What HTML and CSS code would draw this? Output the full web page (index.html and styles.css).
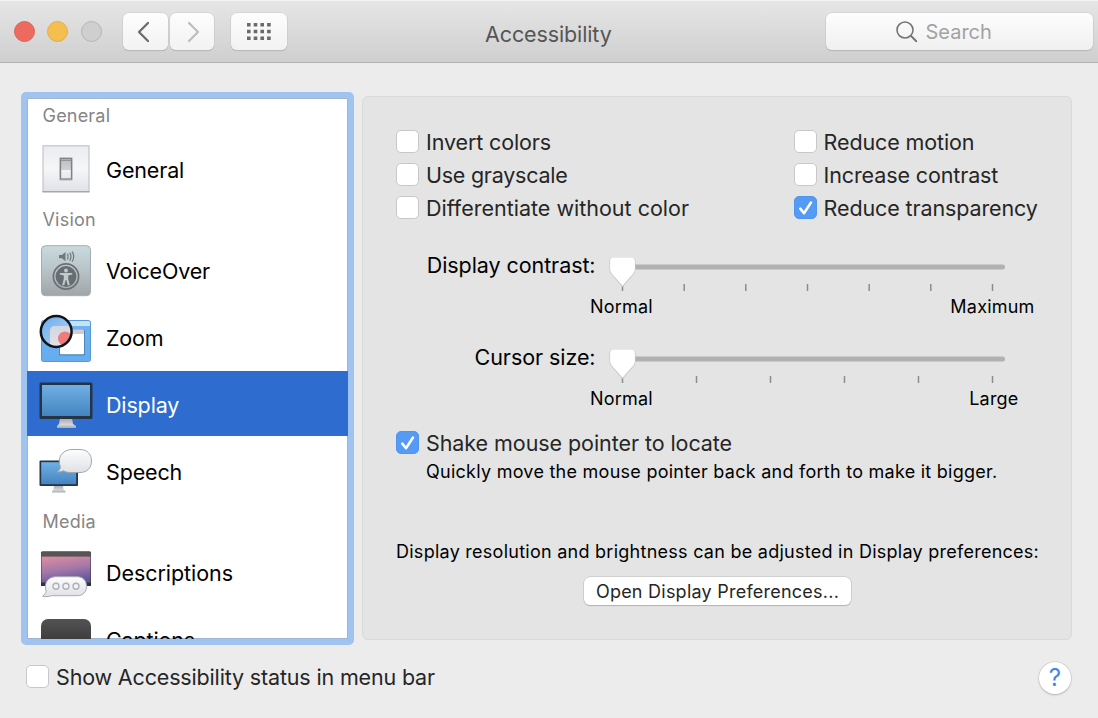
FILE: index.html
```
<!DOCTYPE html>
<html lang="en">
<head>
<meta charset="utf-8">
<title>Accessibility</title>
<link rel="stylesheet" href="styles.css">
</head>
<body>
<div class="window">
  <header class="titlebar">
    <div class="lights">
      <span class="light light-red"></span>
      <span class="light light-yellow"></span>
      <span class="light light-off"></span>
    </div>
    <div class="nav">
      <button class="tool tool-back" aria-label="Back"><svg width="14" height="22" viewBox="0 0 14 22"><path d="M12 2 L3 11 L12 20" fill="none" stroke="#6c6c6c" stroke-width="2.3" stroke-linecap="round" stroke-linejoin="round"/></svg></button>
      <button class="tool tool-forward" aria-label="Forward"><svg width="14" height="22" viewBox="0 0 14 22"><path d="M2 2 L11 11 L2 20" fill="none" stroke="#bdbdbd" stroke-width="2.2" stroke-linecap="round" stroke-linejoin="round"/></svg></button>
    </div>
    <button class="tool tool-grid" aria-label="Show all">
      <svg width="24" height="17" viewBox="0 0 24 17" fill="#6a6a6a"><path d="M0 0h3.6v3.6H0zM6.7 0h3.6v3.6H6.7zM13.4 0H17v3.6h-3.6zM20.1 0h3.6v3.6h-3.6zM0 6.7h3.6v3.6H0zM6.7 6.7h3.6v3.6H6.7zM13.4 6.7H17v3.6h-3.6zM20.1 6.7h3.6v3.6h-3.6zM0 13.4h3.6V17H0zM6.7 13.4h3.6V17H6.7zM13.4 13.4H17V17h-3.6zM20.1 13.4h3.6V17h-3.6z"/></svg>
    </button>
    <h1 class="title">Accessibility</h1>
    <div class="search">
      <svg width="22" height="22" viewBox="0 0 22 22" fill="none" stroke="#757575" stroke-linecap="round"><circle cx="9" cy="9" r="8" stroke-width="1.6"/><path d="M14.8 14.8 L20.3 20.2" stroke-width="1.9"/></svg>
      <span class="search-text">Search</span>
    </div>
  </header>

  <main class="content">
    <nav class="sidebar">
      <div class="group group-first">General</div>
      <div class="item">
        <svg class="icon icon-low" width="54" height="54" viewBox="0 0 54 54">
          <defs>
            <linearGradient id="plate" x1="0" y1="0" x2="0" y2="1"><stop offset="0" stop-color="#ebecef"/><stop offset=".5" stop-color="#f5f6f8"/><stop offset="1" stop-color="#e0e2e7"/></linearGradient>
            <linearGradient id="switch" x1="0" y1="0" x2="0" y2="1"><stop offset="0" stop-color="#b9bbbe"/><stop offset=".2" stop-color="#c2c4c7"/><stop offset=".55" stop-color="#cfd1d4"/><stop offset=".57" stop-color="#f2f3f4"/><stop offset="1" stop-color="#e5e7e9"/></linearGradient>
          </defs>
          <rect x="4" y="3.8" width="46" height="46" fill="url(#plate)" stroke="#b9bbbe"/>
          <path d="M3.5 49.8h47" stroke="#96989b"/>
          <rect x="20" y="15" width="14" height="24" rx="1.5" fill="#cfd0d3"/>
          <rect x="21.5" y="16.5" width="11" height="20.5" fill="url(#switch)" stroke="#808285" stroke-width="1.3"/>
          <path d="M22 18.4h10" stroke="#8d8f92" stroke-width="1"/>
        </svg>
        <span class="item-label">General</span>
      </div>
      <div class="group">Vision</div>
      <div class="item">
        <svg class="icon" width="54" height="54" viewBox="0 0 54 54">
          <defs><linearGradient id="vo" x1="0" y1="0" x2="0" y2="1"><stop offset="0" stop-color="#c9dade"/><stop offset=".5" stop-color="#b8c3c7"/><stop offset="1" stop-color="#9fa5a9"/></linearGradient></defs>
          <rect x="2.5" y="2.7" width="49" height="50" rx="4" fill="url(#vo)" stroke="#a2adb1"/>
          <path d="M20 12h2.8l3.7-3v9.2l-3.7-3H20z" fill="#6f7a7e"/>
          <path d="M28.4 10.800q1.500 2.800 0 5.600M30.800 9.600q2.300 4 0 8M33.200 8.600q3 5 0 10" fill="none" stroke="#6f7a7e" stroke-width="1.200"/>
          <circle cx="27" cy="33.500" r="12.600" fill="none" stroke="#6a7175" stroke-width="1.700"/>
          <circle cx="27" cy="33.500" r="10.400" fill="#676e72"/>
          <circle cx="27" cy="27.500" r="1.900" fill="#c3cacc"/>
          <path d="M20.800 30h12.400v1.600l-4 .9v3.200l1.600 6.600h-2l-1.500-5.300h-.6L25.200 42.300h-2l1.600-6.600v-3.200l-4-.9z" fill="#c3cacc"/>
        </svg>
        <span class="item-label">VoiceOver</span>
      </div>
      <div class="item">
        <svg class="icon icon-low" width="54" height="54" viewBox="0 0 54 54">
          <defs>
            <linearGradient id="desk" x1="0" y1="0" x2="0" y2="1"><stop offset="0" stop-color="#71b3ee"/><stop offset="1" stop-color="#64adf0"/></linearGradient>
            <linearGradient id="lens" x1="0" y1="0" x2="1" y2="1"><stop offset="0" stop-color="#69a9ea"/><stop offset="1" stop-color="#b8dcf8"/></linearGradient>
            <linearGradient id="page" x1="0" y1="0" x2="0" y2="1"><stop offset="0" stop-color="#d3d6e0"/><stop offset="1" stop-color="#e9e3e8"/></linearGradient>
            <clipPath id="lensclip"><circle cx="17.2" cy="20.5" r="14.7"/></clipPath>
          </defs>
          <rect x="2.5" y="9.5" width="49" height="41" rx="2" fill="url(#desk)" stroke="#5798d5"/>
          <path d="M3 15V12q0-2 2-2h44q2 0 2 2v3z" fill="#c3e4f7"/>
          <rect x="20" y="18.5" width="26" height="26" rx="1.5" fill="#4b86bd"/>
          <rect x="21" y="18.7" width="24" height="24.5" rx="1" fill="#fff"/>
          <path d="M21 19.700q0-1 1-1h22q1 0 1 1v3.300H21z" fill="#d5cbd3"/>
          <g clip-path="url(#lensclip)"><rect x="1" y="4" width="33" height="33" fill="url(#lens)"/><path d="M11 40V20q0-5 5-5h20v25z" fill="url(#page)"/><circle cx="26" cy="27.500" r="7" fill="#ee7b7e"/></g>
          <circle cx="17.200" cy="20.500" r="15.400" fill="none" stroke="#101418" stroke-width="2.500"/>
        </svg>
        <span class="item-label">Zoom</span>
      </div>
      <div class="item item-selected">
        <svg class="icon icon-low" width="54" height="54" viewBox="0 0 54 54">
          <defs>
            <linearGradient id="screen" x1="0" y1="0" x2="0" y2="1"><stop offset="0" stop-color="#70b0e3"/><stop offset="1" stop-color="#4584c0"/></linearGradient>
            <linearGradient id="foot" x1="0" y1="0" x2="0" y2="1"><stop offset="0" stop-color="#a2a5ab"/><stop offset=".65" stop-color="#d5d6d9"/><stop offset="1" stop-color="#a9abb0"/></linearGradient>
          </defs>
          <path d="M21 41h12l1 6 3 2v2H18v-2l2-2z" fill="url(#foot)"/>
          <rect x=".5" y="5.500" width="53" height="36.500" rx="1.500" fill="#243444"/>
          <rect x="3" y="8" width="48" height="31" fill="url(#screen)"/>
        </svg>
        <span class="item-label">Display</span>
      </div>
      <div class="item">
        <svg class="icon" width="54" height="54" viewBox="0 0 54 54">
          <defs><linearGradient id="bub" x1="0" y1="0" x2="0" y2="1"><stop offset="0" stop-color="#fdfdfe"/><stop offset="1" stop-color="#dfe1e6"/></linearGradient></defs>
          <path d="M15 42h9l.5 4.500 2 1.500v1.500H13V48l1.500-1.500z" fill="url(#foot)"/>
          <rect x=".5" y="17.500" width="38.500" height="25.500" rx="1" fill="#243444"/>
          <rect x="2.200" y="19.200" width="35" height="22" fill="url(#screen)"/>
          <path d="M33 6.500h8c7 0 11.500 4.500 11.500 11.500S48 29.500 41 29.500h-9c-3.500 0-5.500-.5-7.500-1.700-1.500.8-3.500 1.200-6 1.200 2-1.500 3-3.500 2.800-5.500-.8-1.500-1-3.300-1-5.500C20.500 11 26 6.500 33 6.500z" fill="url(#bub)" stroke="#a0a6ad"/>
        </svg>
        <span class="item-label">Speech</span>
      </div>
      <div class="group">Media</div>
      <div class="item">
        <svg class="icon icon-media" width="54" height="54" viewBox="0 0 54 54">
          <defs><linearGradient id="sunset" x1=".3" y1="0" x2=".6" y2="1"><stop offset="0" stop-color="#d68ca1"/><stop offset=".5" stop-color="#a477a8"/><stop offset="1" stop-color="#5c579b"/></linearGradient></defs>
          <path d="M2 5.500q0-2 2-2h46q2 0 2 2V38H2z" fill="#333336"/>
          <rect x="2" y="3.500" width="50" height="5" rx="1" fill="#555"/>
          <rect x="2.500" y="8.500" width="49" height="26" fill="url(#sunset)"/>
          <path d="M17 28.700h21c6 0 9.500 4 9.500 9.500s-3.500 9.500-9.500 9.500H12.500c-3 1-6 1.200-9 .6 2-1.500 3.300-3.300 3.700-5-.6-1.500-.7-3-.7-5.100 0-5.500 4.500-9.500 10.500-9.500z" fill="url(#bub)" stroke="#aaabb0"/>
          <g fill="#f2f2f4" stroke="#b0b1b6" stroke-width="1.400"><circle cx="17" cy="38.300" r="3"/><circle cx="27" cy="38.300" r="3"/><circle cx="37" cy="38.300" r="3"/></g>
        </svg>
        <span class="item-label t-desc">Descriptions</span>
      </div>
      <div class="item">
        <svg class="icon icon-media" width="54" height="54" viewBox="0 0 54 54">
          <defs><linearGradient id="cap" x1="0" y1="0" x2="0" y2="1"><stop offset="0" stop-color="#535353"/><stop offset="1" stop-color="#222"/></linearGradient></defs>
          <rect x="2" y="5" width="50" height="46" rx="7" fill="url(#cap)"/>
        </svg>
        <span class="item-label">Captions</span>
      </div>
    </nav>

    <section class="panel">
      <div class="options">
        <div class="column">
          <label class="check"><span class="box"></span><span>Invert colors</span></label>
          <label class="check"><span class="box"></span><span class="t-gray">Use grayscale</span></label>
          <label class="check"><span class="box"></span><span class="t-diff">Differentiate without color</span></label>
        </div>
        <div class="column">
          <label class="check"><span class="box"></span><span>Reduce motion</span></label>
          <label class="check"><span class="box"></span><span>Increase contrast</span></label>
          <label class="check"><span class="box box-on"><svg width="23" height="23" viewBox="0 0 23 23"><path d="M6.300 12.600 L10 17.200 L17 6.500" fill="none" stroke="#fff" stroke-width="2.500" stroke-linecap="round" stroke-linejoin="round"/></svg></span><span>Reduce transparency</span></label>
        </div>
      </div>

      <div class="slider-row">
        <span class="slider-label">Display contrast:</span>
        <div class="slider">
          <svg width="400" height="40" viewBox="0 0 400 40">
            <rect x="6" y="10.500" width="395" height="5" rx="2.500" fill="#b1b1b1"/>
            <path d="M18.500 30v7M80.200 30v7M141.800 30v7M203.500 30v7M265.200 30v7M326.800 30v7M388.500 30v7" stroke="#8c8c8c" stroke-width="1.500"/>
            <g transform="translate(0 1)">
              <path d="M9.500 2.600h18q4 0 4 4v8q0 2.500-1.700 4.500L18.500 32.200 7.200 19.100q-1.700-2-1.700-4.500v-8q0-4 4-4z" fill="#c4c4c4"/>
              <path d="M9.500 2.500h18q3.400 0 3.400 3.500v8.200q0 2.300-1.600 4.200L18.500 30.800 7.700 18.400q-1.600-1.900-1.600-4.200V6q0-3.500 3.400-3.500z" fill="#fff"/>
            </g>
          </svg>
          <div class="ends"><span>Normal</span><span>Maximum</span></div>
        </div>
      </div>
      <div class="slider-row">
        <span class="slider-label">Cursor size:</span>
        <div class="slider">
          <svg width="400" height="40" viewBox="0 0 400 40">
            <rect x="6" y="10.500" width="395" height="5" rx="2.500" fill="#b1b1b1"/>
            <path d="M18.500 30v7M92.500 30v7M166.500 30v7M240.500 30v7M314.500 30v7M388.500 30v7" stroke="#8c8c8c" stroke-width="1.500"/>
            <g transform="translate(0 1)">
              <path d="M9.500 2.600h18q4 0 4 4v8q0 2.500-1.700 4.500L18.500 32.200 7.200 19.100q-1.700-2-1.700-4.500v-8q0-4 4-4z" fill="#c4c4c4"/>
              <path d="M9.500 2.500h18q3.400 0 3.400 3.500v8.200q0 2.300-1.600 4.200L18.500 30.800 7.700 18.400q-1.600-1.900-1.600-4.200V6q0-3.500 3.400-3.500z" fill="#fff"/>
            </g>
          </svg>
          <div class="ends"><span>Normal</span><span class="end-large">Large</span></div>
        </div>
      </div>

      <label class="check check-shake"><span class="box box-on"><svg width="23" height="23" viewBox="0 0 23 23"><path d="M6.300 12.600 L10 17.200 L17 6.500" fill="none" stroke="#fff" stroke-width="2.500" stroke-linecap="round" stroke-linejoin="round"/></svg></span><span class="t-shake">Shake mouse pointer to locate</span></label>
      <p class="hint">Quickly move the mouse pointer back and forth to make it bigger.</p>
      <p class="note">Display resolution and brightness can be adjusted in Display preferences:</p>
      <button class="open">Open Display Preferences...</button>
    </section>
  </main>

  <footer class="footer">
    <label class="check"><span class="box"></span><span class="t-show">Show Accessibility status in menu bar</span></label>
    <button class="help" aria-label="Help">?</button>
  </footer>
</div>
</body>
</html>
```
FILE: styles.css
```
* { box-sizing: border-box; }

body {
  margin: 0;
  font-family: Inter, Roboto, "Liberation Sans", sans-serif;
  color: #262626;
}

button { font-family: inherit; padding: 0; border: 0; }

.window {
  width: 1098px;
  height: 718px;
  background: #ececec;
  overflow: hidden;
  display: flex;
  flex-direction: column;
}

.titlebar {
  height: 63px;
  flex: none;
  display: flex;
  align-items: flex-start;
  padding: 13px 5px 0 14px;
  background: linear-gradient(#e6e6e6, #cfcfcf);
  border-bottom: 1px solid #b3b3b3;
  box-shadow: inset 0 1px 0 #f3f3f3;
}

.lights { display: flex; gap: 12.3px; padding-top: 8px; width: 108px; }
.light { width: 21px; height: 21px; border-radius: 50%; border: 1px solid; }
.light-red { background: #ec6a5e; border-color: #df6058; }
.light-yellow { background: #f4bf4f; border-color: #e0ae4c; }
.light-off { background: #cfcfcf; border-color: #b5b5b5; }

.tool {
  height: 37px;
  border-radius: 6px;
  background: linear-gradient(#fdfdfd, #f2f2f2);
  box-shadow: 0 0 0 .5px #c8c8c8, 0 1px 1px #a8a8a8;
  display: flex;
  align-items: center;
  justify-content: center;
}
.nav { display: flex; gap: 2px; margin-left: 1px; }
.tool-back { width: 45px; padding-right: 6px; }
.tool-forward { width: 44px; padding-left: 3px; }
.tool-grid { width: 56px; margin-left: 17px; }

.title {
  margin: 6.500px 0 0 198px;
  font-size: 21.500px;
  line-height: 28px;
  font-weight: 400;
  letter-spacing: -.12px;
  color: #555;
  width: 340px;
}

.search {
  width: 267px;
  height: 37px;
  margin-left: auto;
  border-radius: 6px;
  background: linear-gradient(#fdfdfd, #f0f0f0);
  box-shadow: 0 0 0 .5px #c8c8c8, 0 1px 1px #a8a8a8;
  display: flex;
  align-items: center;
  padding-left: 70px;
  gap: 7.500px;
}
.search svg { margin-top: 1px; }
.search-text { font-size: 20px; color: #a2a2a2; line-height: 24px; padding-top: 1px; }

.content { height: 582px; flex: none; display: flex; padding: 29px 26px 0 21px; gap: 8px; }

.sidebar {
  width: 333px;
  height: 553px;
  flex: none;
  border: 6px solid #a0c3f0;
  border-radius: 5px;
  background: #fff;
  box-shadow: inset 0 0 0 1px #9fb6d3;
  overflow: hidden;
}
.group {
  height: 35px;
  line-height: 35px;
  padding-left: 15.500px;
  font-size: 18px;
  letter-spacing: .2px;
  color: #858585;
}
.group-first { height: 37.800px; }
.item {
  height: 65px;
  margin-bottom: 1.700px;
  display: flex;
  align-items: center;
  gap: 13px;
  padding-left: 12px;
}
.icon { flex: none; }
.icon-low { margin-top: 2px; }
.icon-media { margin-top: 6px; }
.item-label { font-size: 21.500px; line-height: 28px; letter-spacing: -.15px; color: #000; padding-top: 3px; }
.item-label.t-desc { letter-spacing: -.06px; }
.item-selected { background: #2e6dcf; }
.item-selected .item-label { color: #fff; }

.panel {
  width: 710px;
  height: 544px;
  margin-top: 4px;
  border: 1px solid #d9d9d9;
  border-radius: 6px;
  background: #e4e4e4;
  padding: 28px 32px 0 33px;
}
.options { display: flex; }
.column { width: 398.500px; }
.column + .column { width: 246px; }

.check {
  display: flex;
  align-items: center;
  height: 33.400px;
  font-size: 21.500px;
  line-height: 28px;
  letter-spacing: -.12px;
  gap: 7px;
  white-space: nowrap;
}
.t-gray { letter-spacing: -.25px; }
.t-diff { letter-spacing: 0; }
.t-shake { letter-spacing: -.07px; }
.t-show { letter-spacing: -.16px; }
.box {
  width: 23px;
  height: 23px;
  flex: none;
  border-radius: 5px;
  background: #fff;
  border: 1px solid #c8c8c8;
  margin-top: -1px;
}
.box-on { background: #559bf5; border-color: #4f94ee; }
.box-on svg { display: block; margin: -1px; }

.slider-row { display: flex; height: 91.700px; padding-top: 24px; color: #000; }
.slider-label { width: 199.500px; text-align: right; font-size: 21.500px; line-height: 32px; letter-spacing: -.07px; white-space: nowrap; }
.slider { width: 401px; margin-left: 8.500px; }
.slider svg { display: block; margin-top: 5px; overflow: visible; }
.ends { display: flex; justify-content: space-between; font-size: 18px; letter-spacing: .2px; line-height: 20px; margin: 3px -29.500px 0 -14px; }
.end-large { margin-right: 16px; }

.check-shake { margin-top: 18px; }
.hint, .note { font-size: 18px; line-height: 24px; letter-spacing: .26px; color: #000; white-space: nowrap; }
.hint { margin: 0 0 0 30px; }
.note { margin: 56px 0 0; }
.open {
  display: block;
  width: 267px;
  height: 28px;
  margin: 13px 0 0 188px;
  border-radius: 6px;
  background: #fff;
  box-shadow: 0 0 0 .5px #bbb, 0 1px 1px #b0b0b0;
  font-size: 18px;
  letter-spacing: .24px;
  line-height: 29px;
  color: #262626;
  white-space: nowrap;
}

.footer { display: flex; justify-content: space-between; padding: 15px 27px 0 26px; }
.help {
  width: 32px;
  height: 32px;
  margin-top: 2px;
  border-radius: 50%;
  background: #fff;
  box-shadow: 0 0 0 .5px #c4c4c4, 0 1px 2px #b0b0b0;
  color: #3c87ec;
  font-size: 24px;
  line-height: 32px;
}
```
